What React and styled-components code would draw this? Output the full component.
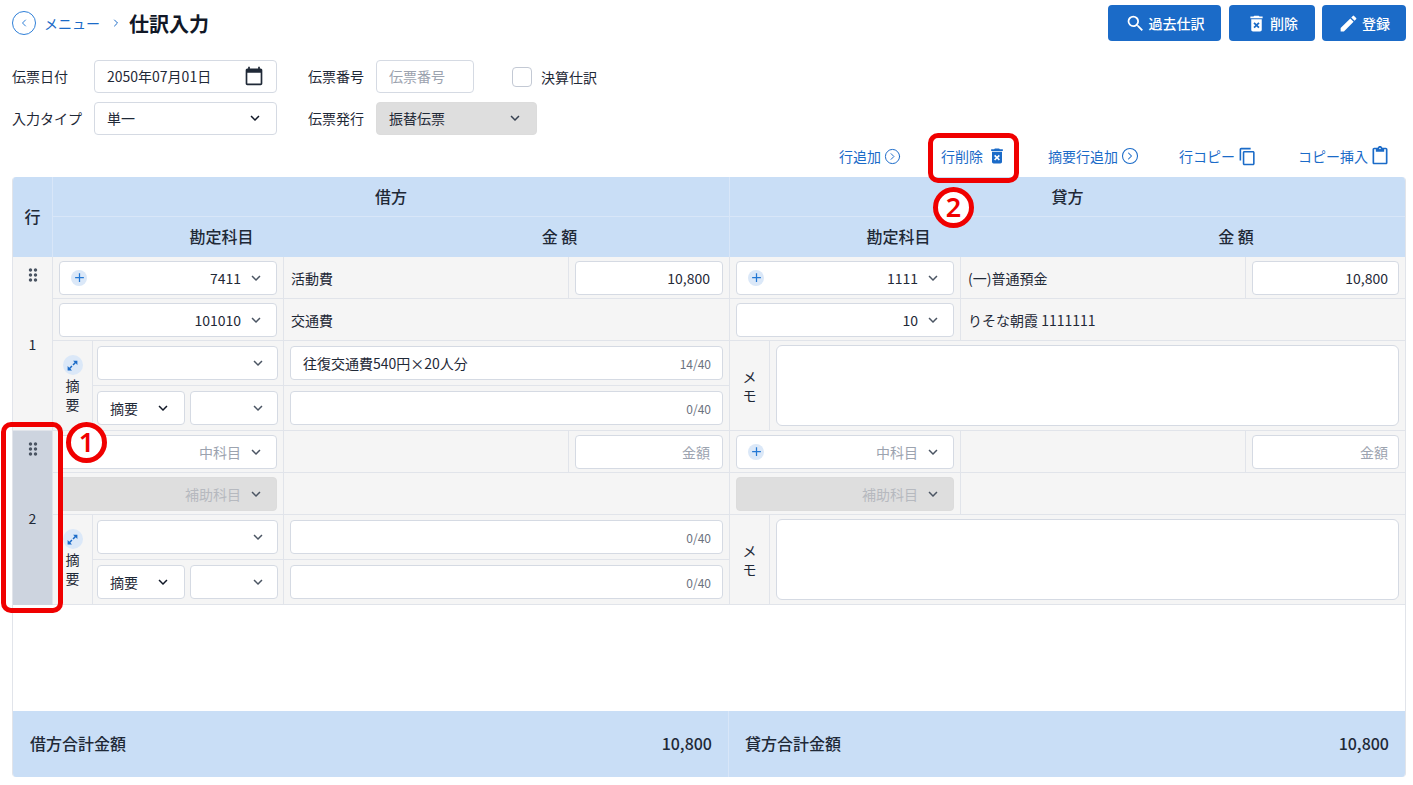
import React from "react";
import styled, { createGlobalStyle } from "styled-components";
import {
  MdSearch,
  MdDeleteForever,
  MdEdit,
  MdOutlineContentCopy,
  MdOutlineContentPaste,
  MdDragIndicator,
  MdAdd,
  MdCalendarToday,
  MdKeyboardArrowDown,
} from "react-icons/md";
import { ChevronLeft, ChevronRight, CircleChevronRight } from "lucide-react";

const GlobalStyle = createGlobalStyle`
  * { box-sizing: border-box; }
  html, body { margin: 0; padding: 0; background: #fff; }
  body {
    font-family: "Noto Sans CJK JP", "Noto Sans", sans-serif;
    font-size: 14px;
    color: #1f2937;
  }
`;

const BLUE = "#1b6bc8";
const LINE = "#e1e4ea";
const FIELD = "#d5dae3";

const Page = styled.div`
  position: relative;
  width: 1413px;
  height: 785px;
  padding: 5px 7px 0 12px;
  overflow: hidden;
`;

const TopBar = styled.div`
  display: flex;
  justify-content: space-between;
  align-items: center;
  height: 36px;
`;

const Crumbs = styled.div`
  display: flex;
  align-items: center;
`;

const BackButton = styled.span`
  display: flex;
  align-items: center;
  justify-content: center;
  width: 24px;
  height: 24px;
  border: 1px solid #2f7fd8;
  border-radius: 50%;
  color: #2f7fd8;
  margin-right: 8px;
`;

const MenuLink = styled.span`
  color: ${BLUE};
  margin-right: 10px;
`;

const Title = styled.h1`
  margin: 0 0 0 7px;
  font-size: 20px;
  font-weight: 700;
  color: #111827;
`;

const Actions = styled.div`
  display: flex;
  gap: 7px;
`;

const ActionButton = styled.button`
  display: flex;
  align-items: center;
  justify-content: center;
  gap: 3px;
  width: ${(p) => p.$width}px;
  height: 36px;
  margin-right: ${(p) => p.$after || 0}px;
  padding: 0;
  border: 0;
  border-radius: 4px;
  background: ${BLUE};
  color: #fff;
  font: 500 14px "Noto Sans CJK JP", sans-serif;
`;

const FormGrid = styled.div`
  display: grid;
  grid-template-columns: 82px 183px 31px 68px auto;
  grid-template-rows: 33px 33px;
  row-gap: 9px;
  margin-top: 19px;
  align-items: center;
`;

const Label = styled.span`
  margin-top: -2px;
  color: #1f2937;
`;

const Field = styled.div`
  display: flex;
  align-items: center;
  justify-content: ${(p) => p.$justify || "space-between"};
  width: ${(p) => (p.$width ? `${p.$width}px` : "100%")};
  height: ${(p) => p.$height || 33}px;
  padding: 0 ${(p) => p.$padRight ?? 12}px 0 ${(p) => p.$padLeft ?? 12}px;
  border: 1px solid ${(p) => (p.$disabled ? "#dcdcdc" : FIELD)};
  border-radius: 4px;
  background: ${(p) => (p.$disabled ? "#dedede" : "#fff")};
  color: ${(p) => (p.$muted ? "#9ca3af" : "#1f2937")};
`;

const FormField = styled(Field)`
  padding-bottom: 2px;
`;

const FormExtra = styled.div`
  display: flex;
  align-items: center;
  gap: 38px;
`;

const CheckLabel = styled.label`
  display: flex;
  align-items: center;
  gap: 9px;
  line-height: 18px;
`;

const CheckBox = styled.span`
  width: 20px;
  height: 20px;
  border: 1px solid #c3c9d4;
  border-radius: 4px;
  background: #fff;
`;

const Toolbar = styled.div`
  display: flex;
  justify-content: flex-end;
  align-items: center;
  height: 42px;
  padding-right: 16px;
`;

const ToolLink = styled.span`
  display: flex;
  align-items: center;
  gap: ${(p) => p.$gap ?? 3}px;
  margin-left: ${(p) => p.$left}px;
  color: ${BLUE};
`;

const Sheet = styled.div`
  display: flex;
  flex-direction: column;
  width: 1394px;
  height: 600px;
  border-left: 1px solid ${LINE};
  border-right: 1px solid ${LINE};
  border-radius: 4px;
  overflow: hidden;
`;

const Head = styled.div`
  display: grid;
  grid-template-columns: 40px 677px 1fr;
  grid-template-rows: 40px 40px;
  flex: none;
  background: #c9def6;
  font-size: 16px;
  font-weight: 500;
  color: #1f2937;
`;

const HeadRow = styled.div`
  grid-row: 1 / 3;
  display: flex;
  align-items: center;
  justify-content: center;
  padding-bottom: 2px;
  border-right: 1px solid #d8e6f8;
`;

const HeadTitle = styled.div`
  display: flex;
  align-items: center;
  justify-content: center;
  padding-bottom: 2px;
  border-bottom: 1px solid #d8e6f8;
  border-right: ${(p) => (p.$first ? "1px solid #d8e6f8" : "0")};
`;

const HeadSub = styled.div`
  display: grid;
  grid-template-columns: 337px 1fr;
  align-items: center;
  padding-bottom: 2px;
  text-align: center;
  border-right: ${(p) => (p.$first ? "1px solid #d8e6f8" : "0")};
`;

const Entry = styled.div`
  display: grid;
  grid-template-columns: 40px 677px 1fr;
  flex: none;
  height: 174px;
`;

const RowCell = styled.div`
  display: flex;
  flex-direction: column;
  align-items: center;
  padding-top: 8px;
  background: ${(p) => (p.$selected ? "#cdd4df" : "#f5f5f5")};
  border-right: 1px solid ${LINE};
  border-bottom: 1px solid ${(p) => (p.$selected ? "#cdd4df" : LINE)};
  color: #4b5563;
`;

const RowNumber = styled.span`
  margin-top: 49px;
  color: #1f2937;
`;

const Side = styled.div`
  display: flex;
  flex-direction: column;
  border-right: ${(p) => (p.$credit ? "0" : `1px solid ${LINE}`)};
  border-bottom: 1px solid ${LINE};
  background: #f5f5f5;
`;

const Line = styled.div`
  display: grid;
  grid-template-columns: ${(p) => (p.$amount ? "231px 285px 1fr" : "231px 1fr")};
  height: 42px;
  border-bottom: 1px solid ${LINE};
`;

const Cell = styled.div`
  display: flex;
  align-items: center;
  padding: 0 6px;
  border-right: ${(p) => (p.$last ? "0" : `1px solid ${LINE}`)};
`;

const NameCell = styled(Cell)`
  padding-left: 7px;
  color: #1f2937;
`;

const PlusBadge = styled.span`
  display: flex;
  align-items: center;
  justify-content: center;
  width: 16px;
  height: 16px;
  border-radius: 50%;
  background: #dbe8f8;
  color: #2478d4;
`;

const AcctValue = styled.span`
  display: flex;
  align-items: center;
  gap: 6px;
  margin-left: auto;
  color: ${(p) => (p.$tone === "muted" ? "#9ca3af" : p.$tone === "faint" ? "#b6b9bf" : "#1f2937")};
`;

const ChevronSlot = styled.span`
  display: flex;
  color: #4b5563;
`;

const MemoArea = styled.div`
  display: grid;
  grid-template-columns: 40px 1fr;
  flex: 1;
`;

const MemoLabel = styled.div`
  display: flex;
  flex-direction: column;
  align-items: center;
  justify-content: center;
  padding-bottom: ${(p) => p.$lift}px;
  border-right: 1px solid ${LINE};
  line-height: 19px;
`;

const ExpandBadge = styled.span`
  display: flex;
  align-items: center;
  justify-content: center;
  width: 20px;
  height: 20px;
  margin-bottom: 1px;
  border-radius: 50%;
  background: #dbe8f8;
  color: ${BLUE};
`;

const MemoStack = styled.div`
  display: grid;
  grid-template-rows: 45px 1fr;
`;

const MemoLine = styled.div`
  display: grid;
  grid-template-columns: 191px 1fr;
  border-bottom: ${(p) => (p.$last ? "0" : `1px solid ${LINE}`)};
`;

const PickCell = styled.div`
  display: flex;
  align-items: center;
  gap: 5px;
  padding: 0 5px 0 4px;
  border-right: 1px solid ${LINE};
`;

const TextCell = styled.div`
  display: flex;
  align-items: center;
  padding: 0 6px;
`;

const Counter = styled.span`
  margin-left: auto;
  font-size: 12px;
  color: #6b7280;
`;

const MemoBoxCell = styled.div`
  display: flex;
  padding: 4px 6px;
`;

const MemoBox = styled.div`
  flex: 1;
  border: 1px solid ${FIELD};
  border-radius: 6px;
  background: #fff;
`;

const Spacer = styled.div`
  flex: 1;
`;

const Totals = styled.div`
  display: grid;
  grid-template-columns: 716px 1fr;
  flex: none;
  height: 66px;
  background: #c9def6;
  font-size: 16px;
  font-weight: 500;
`;

const TotalCell = styled.div`
  display: flex;
  align-items: center;
  justify-content: space-between;
  padding: 0 16px 2px ${(p) => p.$left}px;
  border-right: ${(p) => (p.$divider ? "1px solid #d8e6f8" : "0")};
`;

const RedBox = styled.div`
  position: absolute;
  left: ${(p) => p.$x}px;
  top: ${(p) => p.$y}px;
  width: ${(p) => p.$w}px;
  height: ${(p) => p.$h}px;
  border: 5px solid #f00000;
  border-radius: 10px;
`;

const Marker = styled.div`
  position: absolute;
  left: ${(p) => p.$x}px;
  top: ${(p) => p.$y}px;
  display: flex;
  align-items: center;
  justify-content: center;
  width: 41px;
  height: 41px;
  padding-bottom: 2px;
  border: 5px solid #f00000;
  border-radius: 50%;
  background: #fff;
  color: #f00000;
  font: 600 27px/1 "Noto Sans", sans-serif;
`;

const Chevron = ({ size = 18 }) => (
  <ChevronSlot>
    <MdKeyboardArrowDown size={size} />
  </ChevronSlot>
);

const ExpandIcon = () => (
  <svg width="13" height="13" viewBox="0 0 24 24" fill="currentColor">
    <path d="M13 3h8v8l-3-3-4 4-2-2 4-4z" />
    <path d="M11 21H3v-8l3 3 4-4 2 2-4 4z" />
  </svg>
);

const AcctSelect = ({ plus, value, tone, disabled }) => (
  <Field $disabled={disabled} $padLeft={11} $padRight={11} $height={34}>
    {plus && (
      <PlusBadge>
        <MdAdd size={15} />
      </PlusBadge>
    )}
    <AcctValue $tone={tone}>
      {value}
      <Chevron />
    </AcctValue>
  </Field>
);

const Amount = ({ value, placeholder, credit }) => (
  <Field $justify="flex-end" $muted={!value} $height={34} $padRight={credit ? 10 : 12}>
    {value || placeholder}
  </Field>
);

const Notes = ({ text, top, bottom }) => (
  <MemoArea>
    <MemoLabel $lift={2}>
      <ExpandBadge>
        <ExpandIcon />
      </ExpandBadge>
      <span>摘</span>
      <span>要</span>
    </MemoLabel>
    <MemoStack>
      <MemoLine>
        <PickCell>
          <Field $justify="flex-end" $height={34} $padRight={10}>
            <Chevron />
          </Field>
        </PickCell>
        <TextCell>
          <Field $height={34} $padRight={11}>
            {text}
            <Counter>{top}</Counter>
          </Field>
        </TextCell>
      </MemoLine>
      <MemoLine $last>
        <PickCell>
          <Field $width={88} $height={34}>
            摘要
            <MdKeyboardArrowDown size={18} color="#111827" />
          </Field>
          <Field $width={88} $justify="flex-end" $height={34} $padRight={10}>
            <Chevron />
          </Field>
        </PickCell>
        <TextCell>
          <Field $height={34} $padRight={11}>
            <Counter>{bottom}</Counter>
          </Field>
        </TextCell>
      </MemoLine>
    </MemoStack>
  </MemoArea>
);

const Memo = () => (
  <MemoArea>
    <MemoLabel $lift={0}>
      <span>メ</span>
      <span>モ</span>
    </MemoLabel>
    <MemoBoxCell>
      <MemoBox />
    </MemoBoxCell>
  </MemoArea>
);

const SideBlock = ({ data, credit, children }) => (
  <Side $credit={credit}>
    <Line $amount>
      <Cell>
        <AcctSelect plus value={data.code || "中科目"} tone={data.code ? "" : "muted"} />
      </Cell>
      <NameCell>{data.name}</NameCell>
      <Cell $last>
        <Amount value={data.amount} placeholder="金額" credit={credit} />
      </Cell>
    </Line>
    <Line>
      <Cell>
        <AcctSelect
          value={data.sub || "補助科目"}
          tone={data.sub ? "" : "faint"}
          disabled={!data.sub}
        />
      </Cell>
      <NameCell $last>{data.subName}</NameCell>
    </Line>
    {children}
  </Side>
);

const entries = [
  {
    no: 1,
    debit: { code: "7411", name: "活動費", amount: "10,800", sub: "101010", subName: "交通費" },
    credit: { code: "1111", name: "(一)普通預金", amount: "10,800", sub: "10", subName: "りそな朝霞 1111111" },
    text: "往復交通費540円×20人分",
    top: "14/40",
  },
  { no: 2, selected: true, debit: {}, credit: {}, text: "", top: "0/40" },
];

const App = () => (
  <Page>
    <GlobalStyle />
    <TopBar>
      <Crumbs>
        <BackButton>
          <ChevronLeft size={12} />
        </BackButton>
        <MenuLink>メニュー</MenuLink>
        <ChevronRight size={12} color={BLUE} />
        <Title>仕訳入力</Title>
      </Crumbs>
      <Actions>
        <ActionButton $width={113} $after={1}>
          <MdSearch size={21} />
          過去仕訳
        </ActionButton>
        <ActionButton $width={86}>
          <MdDeleteForever size={21} />
          削除
        </ActionButton>
        <ActionButton $width={84}>
          <MdEdit size={21} />
          登録
        </ActionButton>
      </Actions>
    </TopBar>

    <FormGrid>
      <Label>伝票日付</Label>
      <FormField>
        2050年07月01日
        <MdCalendarToday size={20} color="#1f2937" />
      </FormField>
      <span />
      <Label>伝票番号</Label>
      <FormExtra>
        <FormField $width={98} $muted>
          伝票番号
        </FormField>
        <CheckLabel>
          <CheckBox />
          決算仕訳
        </CheckLabel>
      </FormExtra>
      <Label>入力タイプ</Label>
      <FormField>
        単一
        <MdKeyboardArrowDown size={18} color="#111827" />
      </FormField>
      <span />
      <Label>伝票発行</Label>
      <FormField $width={161} $disabled>
        振替伝票
        <MdKeyboardArrowDown size={18} color="#374151" />
      </FormField>
    </FormGrid>

    <Toolbar>
      <ToolLink $gap={3}>
        行追加
        <CircleChevronRight size={17} strokeWidth={1.4} />
      </ToolLink>
      <ToolLink $left={40} $gap={4}>
        行削除
        <MdDeleteForever size={20} />
      </ToolLink>
      <ToolLink $left={41} $gap={3}>
        摘要行追加
        <CircleChevronRight size={18} strokeWidth={1.4} />
      </ToolLink>
      <ToolLink $left={40} $gap={3}>
        行コピー
        <MdOutlineContentCopy size={19} />
      </ToolLink>
      <ToolLink $left={41} $gap={2}>
        コピー挿入
        <MdOutlineContentPaste size={20} />
      </ToolLink>
    </Toolbar>

    <Sheet>
      <Head>
        <HeadRow>行</HeadRow>
        <HeadTitle $first>借方</HeadTitle>
        <HeadTitle>貸方</HeadTitle>
        <HeadSub $first>
          <span>勘定科目</span>
          <span>金 額</span>
        </HeadSub>
        <HeadSub>
          <span>勘定科目</span>
          <span>金 額</span>
        </HeadSub>
      </Head>
      {entries.map((entry) => (
        <Entry key={entry.no}>
          <RowCell $selected={entry.selected}>
            <MdDragIndicator size={20} />
            <RowNumber>{entry.no}</RowNumber>
          </RowCell>
          <SideBlock data={entry.debit}>
            <Notes text={entry.text} top={entry.top} bottom="0/40" />
          </SideBlock>
          <SideBlock data={entry.credit} credit>
            <Memo />
          </SideBlock>
        </Entry>
      ))}
      <Spacer />
      <Totals>
        <TotalCell $left={17} $divider>
          <span>借方合計金額</span>
          <span>10,800</span>
        </TotalCell>
        <TotalCell $left={16}>
          <span>貸方合計金額</span>
          <span>10,800</span>
        </TotalCell>
      </Totals>
    </Sheet>

    <RedBox $x={1} $y={422} $w={62} $h={191} />
    <RedBox $x={928} $y={133} $w={91} $h={50} />
    <Marker $x={66} $y={422}>1</Marker>
    <Marker $x={933} $y={187}>2</Marker>
  </Page>
);

export default App;
